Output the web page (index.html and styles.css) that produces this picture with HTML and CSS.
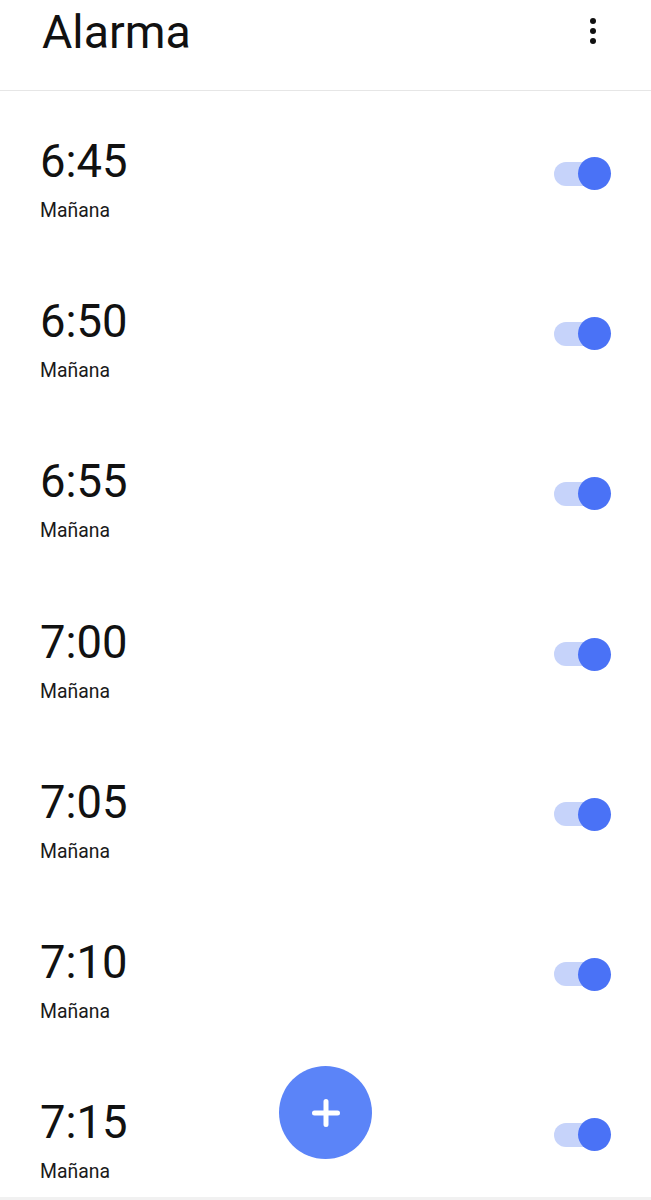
FILE: index.html
```html
<!DOCTYPE html>
<html lang="es">
<head>
<meta charset="utf-8">
<title>Alarma</title>
<link rel="stylesheet" href="styles.css">
</head>
<body>
<div class="app">
  <header class="header">
    <h1 class="title">Alarma</h1>
    <svg class="menu" width="6" height="26" viewBox="0 0 6 26" aria-label="Más opciones">
      <circle cx="3" cy="3" r="3"/>
      <circle cx="3" cy="13" r="3"/>
      <circle cx="3" cy="23" r="3"/>
    </svg>
  </header>
  <main class="list">
    <div class="row"><div class="info"><div class="time">6:45</div><div class="label">Mañana</div></div><div class="toggle"><span class="track"></span><span class="thumb"></span></div></div>
    <div class="row"><div class="info"><div class="time">6:50</div><div class="label">Mañana</div></div><div class="toggle"><span class="track"></span><span class="thumb"></span></div></div>
    <div class="row"><div class="info"><div class="time">6:55</div><div class="label">Mañana</div></div><div class="toggle"><span class="track"></span><span class="thumb"></span></div></div>
    <div class="row"><div class="info"><div class="time">7:00</div><div class="label">Mañana</div></div><div class="toggle"><span class="track"></span><span class="thumb"></span></div></div>
    <div class="row"><div class="info"><div class="time">7:05</div><div class="label">Mañana</div></div><div class="toggle"><span class="track"></span><span class="thumb"></span></div></div>
    <div class="row"><div class="info"><div class="time">7:10</div><div class="label">Mañana</div></div><div class="toggle"><span class="track"></span><span class="thumb"></span></div></div>
    <div class="row"><div class="info"><div class="time">7:15</div><div class="label">Mañana</div></div><div class="toggle"><span class="track"></span><span class="thumb"></span></div></div>
  </main>
  <div class="bottom-bar"></div>
  <button class="fab" aria-label="Añadir alarma">
    <svg width="30" height="30" viewBox="0 0 30 30"><path d="M15 3.5V26.5M3.5 15H26.5" stroke="#fff" stroke-width="5" stroke-linecap="round" fill="none"/></svg>
  </button>
</div>
</body>
</html>
```
FILE: styles.css
```css
* { box-sizing: border-box; }
html, body { margin: 0; padding: 0; background: #fff; }
body {
  font-family: Roboto, "Noto Sans", "Liberation Sans", sans-serif;
  color: #141414;
}
.app {
  position: relative;
  width: 651px;
  height: 1200px;
  display: flex;
  flex-direction: column;
  overflow: hidden;
}
.header {
  height: 91px;
  flex-shrink: 0;
  display: flex;
  justify-content: space-between;
  align-items: flex-start;
  padding: 0 55px 0 42px;
  border-bottom: 1px solid #e6e6e6;
}
.title {
  margin: 5px 0 0 0;
  font-size: 46.5px;
  line-height: 54px;
  font-weight: 400;
  color: #111;
}
.menu { margin-top: 18px; fill: #111; }
.list {
  flex: 1;
  overflow: hidden;
  display: flex;
  flex-direction: column;
}
.row {
  flex-shrink: 0;
  height: 160.2px;
  display: flex;
  justify-content: space-between;
  align-items: flex-start;
  padding: 0 40px;
}
.info { padding-top: 45px; }
.time {
  font-size: 45.4px;
  line-height: 52px;
  color: #111;
}
.label {
  margin-top: 11px;
  font-size: 19.4px;
  line-height: 24px;
  color: #1a1a1a;
}
.toggle {
  margin-top: 66px;
  display: flex;
  align-items: center;
  height: 33px;
}
.track {
  width: 46px;
  height: 24px;
  border-radius: 12px;
  background: #c6d3fa;
}
.thumb {
  width: 33px;
  height: 33px;
  border-radius: 50%;
  background: #4a72f6;
  margin-left: -22px;
}
.bottom-bar {
  height: 3px;
  flex-shrink: 0;
  background: #f1f1f1;
}
.fab {
  position: absolute;
  left: 279px;
  top: 1066px;
  width: 93px;
  height: 93px;
  border-radius: 50%;
  border: none;
  padding: 0;
  background: #5b84f8;
  display: flex;
  align-items: center;
  justify-content: center;
}
```
